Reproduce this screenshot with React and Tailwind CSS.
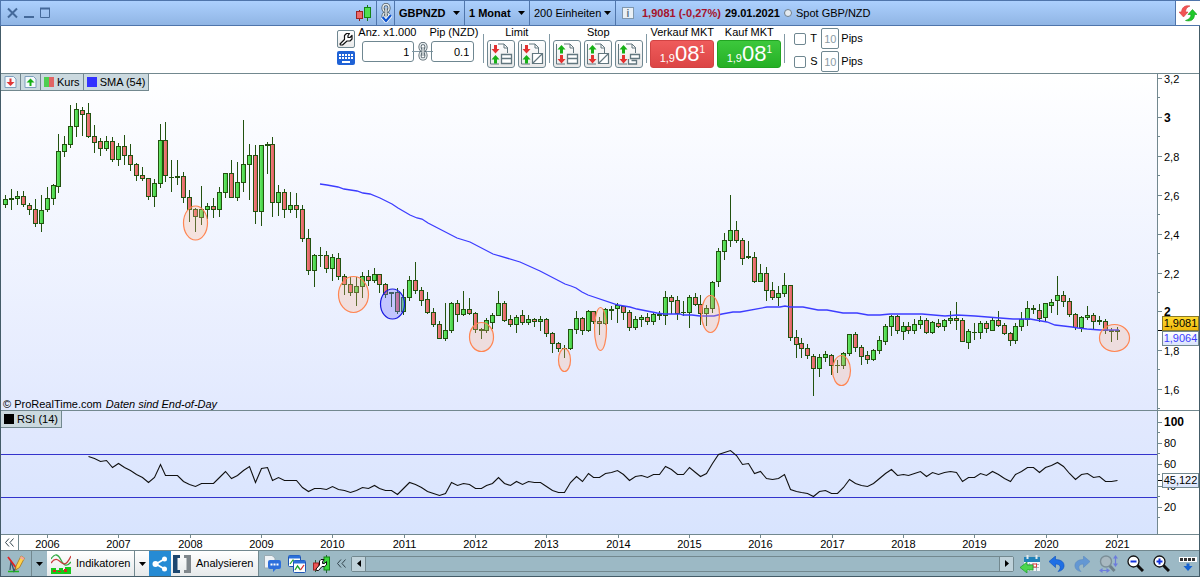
import clsx from 'clsx'

// [high, body top, body bottom, low, direction] per month, g = up, r = down, n = flat
const CANDLES = [
  [195, 199, 205, 208, 'g'], [189, 198, 200, 210, 'n'], [191, 196, 199, 205, 'g'], [191, 196, 205, 207, 'r'],
  [203, 205, 210, 215, 'r'], [199, 209, 224, 227, 'r'], [195, 210, 224, 232, 'g'], [187, 198, 210, 212, 'g'],
  [184, 185, 199, 205, 'g'], [134, 151, 187, 193, 'g'], [136, 144, 152, 157, 'g'], [105, 126, 145, 148, 'g'],
  [103, 109, 127, 137, 'g'], [107, 110, 115, 136, 'r'], [103, 113, 137, 138, 'r'], [125, 136, 143, 153, 'r'],
  [138, 141, 149, 156, 'r'], [136, 141, 149, 151, 'g'], [137, 141, 160, 162, 'r'], [143, 146, 160, 166, 'g'],
  [135, 146, 156, 165, 'r'], [144, 155, 165, 171, 'r'], [163, 164, 176, 181, 'r'], [167, 175, 179, 181, 'r'],
  [178, 178, 197, 200, 'r'], [179, 183, 197, 207, 'g'], [124, 140, 184, 188, 'g'], [122, 140, 176, 182, 'r'],
  [160, 177, 178, 192, 'n'], [160, 176, 178, 185, 'n'], [172, 176, 198, 203, 'r'], [190, 197, 210, 222, 'r'],
  [208, 209, 217, 232, 'r'], [186, 209, 218, 225, 'g'], [203, 206, 210, 219, 'g'], [198, 206, 210, 218, 'r'],
  [187, 192, 210, 217, 'g'], [173, 173, 193, 198, 'g'], [160, 173, 198, 198, 'r'], [162, 182, 198, 201, 'g'],
  [120, 164, 183, 192, 'g'], [144, 155, 165, 200, 'g'], [145, 155, 212, 224, 'r'], [145, 145, 212, 226, 'g'],
  [142, 144, 146, 174, 'n'], [137, 144, 203, 217, 'r'], [185, 192, 203, 216, 'g'], [189, 192, 210, 218, 'r'],
  [192, 205, 210, 213, 'g'], [193, 205, 210, 218, 'r'], [205, 209, 239, 242, 'r'], [229, 238, 271, 275, 'r'],
  [254, 255, 271, 287, 'g'], [247, 255, 256, 267, 'n'], [251, 255, 269, 273, 'r'], [254, 257, 269, 281, 'g'],
  [253, 258, 277, 280, 'r'], [274, 276, 285, 295, 'r'], [277, 284, 293, 296, 'r'], [277, 286, 293, 306, 'g'],
  [272, 276, 287, 298, 'g'], [270, 276, 281, 286, 'r'], [268, 274, 281, 283, 'g'], [274, 274, 285, 293, 'r'],
  [283, 284, 295, 298, 'r'], [292, 292, 294, 307, 'n'], [288, 292, 312, 314, 'r'], [289, 297, 312, 315, 'g'],
  [276, 280, 298, 301, 'g'], [262, 280, 291, 294, 'r'], [287, 290, 301, 306, 'r'], [292, 299, 313, 314, 'r'],
  [308, 312, 325, 327, 'r'], [321, 324, 339, 339, 'r'], [303, 330, 339, 341, 'g'], [302, 303, 331, 333, 'g'],
  [300, 303, 315, 322, 'r'], [291, 309, 315, 316, 'g'], [298, 309, 314, 315, 'r'], [312, 313, 330, 333, 'r'],
  [328, 329, 331, 339, 'n'], [318, 320, 331, 333, 'g'], [313, 315, 323, 329, 'g'], [291, 303, 316, 316, 'g'],
  [301, 303, 321, 322, 'r'], [315, 319, 325, 327, 'r'], [315, 317, 325, 333, 'g'], [310, 315, 323, 325, 'r'],
  [315, 319, 323, 325, 'g'], [318, 319, 322, 327, 'r'], [316, 319, 322, 331, 'g'], [318, 319, 334, 337, 'r'],
  [332, 333, 344, 353, 'r'], [342, 343, 349, 352, 'r'], [345, 348, 349, 358, 'n'], [329, 329, 349, 350, 'g'],
  [311, 318, 330, 334, 'g'], [317, 318, 331, 335, 'r'], [310, 311, 331, 332, 'g'], [311, 311, 322, 324, 'r'],
  [317, 321, 324, 335, 'r'], [308, 309, 324, 325, 'g'], [306, 309, 311, 320, 'n'], [303, 305, 309, 323, 'g'],
  [306, 306, 313, 320, 'r'], [310, 312, 328, 331, 'r'], [316, 319, 328, 330, 'g'], [315, 317, 320, 327, 'g'],
  [313, 317, 322, 325, 'r'], [312, 314, 322, 325, 'g'], [311, 314, 316, 320, 'n'], [291, 297, 316, 325, 'g'],
  [295, 297, 302, 314, 'r'], [296, 300, 314, 320, 'r'], [301, 312, 313, 316, 'n'], [295, 297, 313, 328, 'g'],
  [293, 297, 305, 306, 'r'], [295, 304, 314, 325, 'r'], [305, 308, 314, 326, 'g'], [281, 282, 309, 313, 'g'],
  [248, 251, 282, 287, 'g'], [233, 240, 252, 260, 'g'], [195, 230, 241, 247, 'g'], [221, 230, 241, 243, 'r'],
  [238, 240, 259, 265, 'r'], [241, 256, 258, 259, 'n'], [252, 257, 282, 283, 'r'], [264, 273, 282, 282, 'g'],
  [267, 273, 291, 301, 'r'], [282, 290, 298, 300, 'r'], [286, 293, 298, 306, 'g'], [273, 285, 294, 297, 'g'],
  [285, 285, 338, 341, 'r'], [330, 337, 345, 358, 'r'], [338, 343, 349, 358, 'r'], [344, 348, 356, 359, 'r'],
  [354, 356, 369, 396, 'r'], [354, 357, 369, 377, 'g'], [351, 354, 358, 362, 'g'], [354, 355, 366, 375, 'r'],
  [360, 365, 366, 373, 'n'], [352, 353, 366, 369, 'g'], [334, 334, 354, 356, 'g'], [332, 334, 348, 352, 'r'],
  [345, 347, 357, 365, 'r'], [351, 355, 360, 364, 'r'], [349, 350, 360, 361, 'g'], [336, 340, 351, 354, 'g'],
  [324, 326, 342, 345, 'g'], [315, 316, 327, 336, 'g'], [315, 316, 331, 334, 'r'], [322, 326, 332, 340, 'g'],
  [322, 326, 331, 334, 'r'], [319, 324, 331, 334, 'g'], [316, 320, 325, 329, 'g'], [318, 320, 333, 334, 'r'],
  [321, 322, 333, 334, 'g'], [319, 323, 327, 328, 'r'], [319, 320, 327, 331, 'g'], [311, 318, 321, 324, 'g'],
  [302, 318, 321, 330, 'r'], [318, 320, 342, 342, 'r'], [329, 331, 343, 349, 'g'], [323, 332, 333, 340, 'n'],
  [321, 323, 333, 339, 'g'], [321, 323, 329, 333, 'r'], [318, 320, 331, 331, 'g'], [311, 320, 326, 327, 'r'],
  [323, 325, 334, 335, 'r'], [332, 333, 341, 346, 'r'], [323, 326, 341, 344, 'g'], [312, 319, 327, 331, 'g'],
  [301, 308, 320, 326, 'g'], [305, 308, 310, 314, 'n'], [304, 310, 319, 322, 'r'], [303, 303, 318, 322, 'g'],
  [299, 302, 306, 313, 'g'], [276, 295, 301, 315, 'g'], [291, 295, 302, 307, 'r'], [298, 301, 315, 317, 'r'],
  [313, 314, 328, 330, 'r'], [316, 317, 328, 332, 'g'], [306, 315, 318, 320, 'g'], [313, 315, 322, 330, 'r'],
  [316, 320, 322, 325, 'n'], [319, 321, 331, 334, 'r'], [328, 330, 332, 342, 'n'], [327, 330, 332, 340, 'n'],
]

const SMA =
  '319,184 326,185 337,187 343,189 356,191 362,193 369,194 379,198 391,204 397,208 409,215 416,218 421,219 427,223 456,238 469,242 492,254 519,262 539,271 564,284 570,286 575,288 581,292 587,295 617,305 629,307 636,309 656,313 663,314 679,314 682,315 691,315 699,316 713,316 721,314 732,312 739,312 766,307 779,307 784,306 789,307 802,307 817,310 826,310 842,313 856,313 867,315 879,315 889,314 921,314 944,316 956,315 974,316 999,318 1012,319 1029,319 1046,322 1054,325 1071,327 1077,328 1086,329 1099,330 1118,330'

const RSI_START = 14
const RSI = [
  456, 458, 461, 460, 467, 463, 467, 470, 474, 477, 482, 477, 464, 475, 475, 475, 481, 484, 486, 483, 483, 483, 477,
  471, 478, 475, 470, 466, 482, 468, 467, 480, 477, 480, 480, 480, 487, 491, 488, 488, 489, 486, 489, 490, 492, 490,
  487, 488, 485, 488, 490, 490, 494, 488, 482, 484, 487, 491, 493, 495, 493, 482, 485, 483, 484, 488, 488, 485, 483,
  477, 483, 485, 481, 484, 481, 482, 482, 486, 490, 492, 492, 482, 476, 481, 473, 477, 477, 473, 472, 470, 474, 480,
  476, 475, 477, 474, 474, 466, 469, 474, 474, 467, 472, 476, 473, 463, 454, 452, 450, 455, 464, 463, 473, 471, 478,
  479, 478, 474, 489, 491, 492, 493, 496, 491, 490, 493, 493, 487, 479, 483, 485, 486, 483, 478, 473, 469, 475, 474,
  475, 473, 471, 476, 472, 474, 472, 471, 472, 481, 477, 477, 473, 475, 471, 474, 478, 481, 474, 471, 467, 467, 472,
  467, 465, 462, 466, 473, 479, 474, 473, 477, 476, 481, 481, 480,
]

const MARKS = [
  [194.5, 223, 12, 17], [352.5, 294.5, 15, 18], [391.5, 304, 12, 15, 'blue'], [480.5, 337, 12, 14.5],
  [563.5, 360, 6, 11.5], [599.5, 329, 6, 21.5], [709.5, 314, 9, 18.5], [840.5, 370.5, 9, 15], [1113.5, 338, 15, 13.5],
]

const PLOT_WIDTH = 1156
const YEARS = Array.from({ length: 16 }, (_, i) => 2006 + i)
const PRICE_TICKS = ['3,2', '3', '2,8', '2,6', '2,4', '2,2', '2', '1,8', '1,6']
const BODY_FILL = { g: 'url(#up)', r: 'url(#down)', n: '#22520f' }

const candleX = (i) => Math.floor(4.5 + i * 5.944)

/* ---------- icons ---------- */

function Caret() {
  return (
    <svg width="7" height="4" viewBox="0 0 7 4" aria-hidden="true">
      <path d="M0 0h7L3.5 4z" fill="#000" />
    </svg>
  )
}

function CollapseIcon() {
  return (
    <svg width="9" height="9" viewBox="0 0 9 9" fill="none" stroke="#33444d" aria-hidden="true">
      <path d="M4 .5l-3.500 4 3.500 4M8.500 .5L5 4.500l3.500 4" />
    </svg>
  )
}

function CandlesIcon() {
  return (
    <svg width="16" height="16" viewBox="0 0 16 16" aria-hidden="true">
      <path d="M3.500 5v11" stroke="#8c1d1d" />
      <rect x=".5" y="6.500" width="6" height="7" fill="#ee6a6a" stroke="#9c2323" />
      <path d="M11.500 0v16" stroke="#137a13" />
      <rect x="8.500" y="2.500" width="6" height="10" fill="#4fdf4f" stroke="#158415" />
    </svg>
  )
}

function ChainIcon({ check }) {
  return (
    <svg width="12" height="20" viewBox="0 0 12 20" fill="none" aria-hidden="true">
      <rect x="3" y="1.500" width="6" height="7" rx="3" stroke="#4b5a63" strokeWidth="3" />
      <rect x="3" y="10" width="6" height="7" rx="3" stroke="#4b5a63" strokeWidth="3" />
      <rect x="3" y="1.500" width="6" height="7" rx="3" stroke="#e4eaec" strokeWidth="1.400" />
      <rect x="3" y="10" width="6" height="7" rx="3" stroke="#e4eaec" strokeWidth="1.400" />
      <path d="M6 5v9" stroke="#4b5a63" strokeWidth="3" />
      <path d="M6 5v9" stroke="#f2f5f6" strokeWidth="1.400" />
      {check && (
        <>
          <path d="M2.500 14l3.500 4 5-6" stroke="#fff" strokeWidth="4" />
          <path d="M2.500 14l3.500 4 5-6" stroke="#0d54cf" strokeWidth="2.200" />
        </>
      )}
    </svg>
  )
}

function WrenchIcon() {
  return (
    <svg width="14" height="14" viewBox="0 0 14 14" aria-hidden="true">
      <path
        d="M7.500 1.500h3L9 3.500v2h2l2-2v3.500L11 9H8l-4.500 4H1.500L1 12l4.500-4.500V3.500z"
        fill="#fff"
        stroke="#111"
        strokeWidth="1.200"
        strokeLinejoin="round"
      />
    </svg>
  )
}

function KeyboardIcon() {
  return (
    <svg width="18" height="14" viewBox="0 0 18 14" aria-hidden="true">
      <rect width="18" height="14" rx="2" fill="#1f62d6" />
      <path d="M2 4h14M2 7h14" stroke="#fff" strokeWidth="2" strokeDasharray="2 1" />
      <path d="M5 11h8" stroke="#fff" strokeWidth="2" />
    </svg>
  )
}

function OrderIcon({ up, shape }) {
  const red = <path d="M-1.500 0h3v4h2.500L0 8.500-4 4h2.500z" fill="#e33131" />
  const green = <path d="M-1.500 8.500h3v-4h2.500L0 0-4 4.500h2.500z" fill="#16b016" />
  return (
    <svg width="24" height="22" viewBox="0 0 24 22" fill="none" aria-hidden="true">
      <path d="M9 1h6l3.500 3.500V10M1.500 1v20H10M15 1v4h4" stroke="#62777f" />
      <g transform="translate(6.500 2)">{up ? green : red}</g>
      <g transform="translate(6.500 12)">{up ? red : green}</g>
      {shape === 'bar' && <path d="M12.500 11.500h10v4h-10zM12.500 15.500h10v5h-10z" fill="#fff" stroke="#62777f" strokeWidth="1.300" />}
      {shape === 'slash' && <path d="M12.500 10.500h10v10h-10zM12.500 20.500l10-10" fill="#fff" stroke="#62777f" strokeWidth="1.200" />}
      {shape === 'trail' && <path d="M13.500 11.500h9v4h-9zM11.500 16v5h8v-3.500h-5" fill="#fff" stroke="#62777f" strokeWidth="1.300" />}
    </svg>
  )
}

function SheetIcon({ up }) {
  return (
    <svg width="13" height="12" viewBox="0 0 13 12" aria-hidden="true">
      <path d="M1 .500h8.500L12 3v8.500H1z" fill="#f5f9fd" stroke="#7f9fbd" />
      {up ? (
        <path d="M5.500 10V6.500H2.500L6.500 2.500l4 4h-3V10z" fill="#16b016" />
      ) : (
        <path d="M5.500 2.500V6H2.500l4 4 4-4h-3V2.500z" fill="#e03636" />
      )}
    </svg>
  )
}

function RefreshIcon() {
  return (
    <svg width="18" height="17" viewBox="0 0 18 17" aria-hidden="true">
      <path d="M11 1C5.500 0 3 2.500 2.500 7H0l4.500 5L9 7H6.500c0-3 1.500-5 4.500-6z" fill="#f25555" stroke="#d93c3c" strokeWidth=".6" />
      <path d="M6.500 15.500c5.500 1.500 9-1 9-6H18L13.500 4.500 9 9.500h3c0 3-2 5-5.500 6z" fill="#1fc92a" stroke="#0e9a18" strokeWidth=".6" />
    </svg>
  )
}

function PencilIcon() {
  return (
    <svg width="18" height="18" viewBox="0 0 18 18" fill="none" aria-hidden="true">
      <path d="M1 16.500h11" stroke="#1bb51b" strokeWidth="1.500" />
      <path d="M3 15L4 6l3 10 5-9" stroke="#3d5669" strokeWidth="1.300" />
      <path d="M1 2l9 12" stroke="#e32020" strokeWidth="1.700" />
      <path d="M9 11l5-10 3.500 2-5 9.500L8.500 15z" fill="#ffd24a" stroke="#a8741a" strokeWidth=".8" />
      <path d="M14 1l3.500 2-1 2L13 3z" fill="#f3a5a0" />
    </svg>
  )
}

function IndicatorIcon() {
  return (
    <svg width="20" height="20" viewBox="0 0 20 20" fill="none" aria-hidden="true">
      <path d="M0 5c4-6 7-5 10 1s6 7 10 2" stroke="#35ab45" strokeWidth="1.300" />
      <path d="M0 9c5-7 8-2 11 0s5 1 9-7" stroke="#c63b3b" strokeWidth="1.300" />
      <path d="M0 14h5v2h3v-2h4v2h2v-3h6v7H0z" fill="#16c81a" />
      <path d="M2 18v-2h3v2zM7 18v-1h3v1zM13 18v-3h3v3z" fill="#d22" />
    </svg>
  )
}

function ShareIcon() {
  return (
    <svg width="16" height="16" viewBox="0 0 16 16" aria-hidden="true">
      <path d="M12.500 3L4 8l8.500 5" fill="none" stroke="#fff" strokeWidth="1.800" />
      <circle cx="3.500" cy="8" r="3" fill="#fff" />
      <circle cx="12.500" cy="3" r="2.500" fill="#fff" />
      <circle cx="12.500" cy="13" r="2.500" fill="#fff" />
    </svg>
  )
}

function BracketsIcon() {
  return (
    <svg width="18" height="18" viewBox="0 0 18 18" aria-hidden="true">
      <path d="M0 0h7v3H4.500v12H7v3H0z" fill="#1d4770" />
      <path d="M11 0h7v18h-7v-3h2.500V3H11z" fill="#80878c" />
    </svg>
  )
}

function CommentIcon() {
  return (
    <svg width="17" height="17" viewBox="0 0 17 17" aria-hidden="true">
      <path d="M.500.500H8L11 3v10H.500z" fill="#eef3f6" stroke="#9aabb3" />
      <path d="M6 5h9q2 0 2 2v5q0 2-2 2h-3l-3 3v-3H6q-2 0-2-2V7q0-2 2-2z" fill="#2e6fdc" />
      <path d="M6.500 9.500h8" stroke="#fff" strokeWidth="1.800" strokeDasharray="2 1" />
    </svg>
  )
}

function WindowsIcon() {
  return (
    <svg width="18" height="18" viewBox="0 0 18 18" fill="none" aria-hidden="true">
      <rect x=".500" y=".500" width="12" height="11" rx="1" fill="#fff" stroke="#1e56b4" />
      <path d="M1 2h11" stroke="#2b70da" strokeWidth="3" />
      <path d="M2 9l3-4 2 3" stroke="#1ba52a" strokeWidth="1.200" />
      <rect x="5.500" y="5.500" width="12" height="12" rx="1" fill="#fff" stroke="#1e56b4" />
      <path d="M6 7h11" stroke="#2b70da" strokeWidth="3" />
      <path d="M7 15l2.500-4 3 4" stroke="#1ba52a" strokeWidth="1.300" />
      <path d="M12.500 15l3.500-5" stroke="#d92f2f" strokeWidth="1.300" />
    </svg>
  )
}

function TradeToolIcon() {
  return (
    <svg width="17" height="18" viewBox="0 0 17 18" aria-hidden="true">
      <path d="M2.500 5v12M13.500 0v18" stroke="#23643a" />
      <rect x=".500" y="8" width="5" height="7" fill="#e55" stroke="#9c2323" />
      <rect x="11" y="2" width="5.500" height="13" fill="#3bd63b" stroke="#158415" />
      <path d="M8 4.500h3L9.500 6.500v2h2l2-2V10l-2 1.500H9L5.500 15.500h-2l-.500-1.500L6.500 10V6z" fill="#fff" stroke="#111" />
    </svg>
  )
}

function CalendarIcon() {
  return (
    <svg width="20" height="18" viewBox="0 0 20 18" aria-hidden="true">
      <rect x="4" y="2" width="16" height="14" fill="#f2f5f7" />
      <path d="M4 2h16v5H4z" fill="#2182b8" />
      <path d="M7.500 0v4M16.500 0v4" stroke="#dfe9ee" strokeWidth="2" />
      <path d="M6 9.500h13M6 12.500h13M9.500 8v8M13 8v8M16.500 8v8" stroke="#8fa4ae" strokeWidth=".8" />
      <rect x="13" y="9" width="3.500" height="3" fill="#fff" stroke="#e03a3a" />
      <path d="M0 12.500L7 7v3h6v5H7v3z" fill="#4cd64c" stroke="#1b9b2b" strokeWidth=".7" />
    </svg>
  )
}

function UndoIcon({ redo }) {
  return (
    <svg width="16" height="16" viewBox="0 0 16 16" className={clsx(redo && '-scale-x-100 opacity-45')} aria-hidden="true">
      <path d="M0 5.500L6.500 0v3.500c6 0 9 3 8.500 7-.300 2.500-2.500 4.500-6 5 3.500-3 3-7.500-2.500-7.500v3.500z" fill="#1f6fe5" stroke="#0f50b8" strokeWidth=".6" />
    </svg>
  )
}

function ZoomIcon({ sign }) {
  return (
    <svg width="17" height="17" viewBox="0 0 17 17" aria-hidden="true">
      <path d="M10 10l6 6" stroke="#111" strokeWidth="3" />
      <circle cx="6.500" cy="6.500" r="5.500" fill="#fff" stroke="#111" strokeWidth="1.300" />
      <path d={sign === '+' ? 'M3.500 6.500h6M6.500 3.500v6' : 'M3.500 6.500h6'} stroke="#1432dc" strokeWidth="2" />
    </svg>
  )
}

function ZoomFitIcon() {
  return (
    <svg width="19" height="18" viewBox="0 0 19 18" fill="none" aria-hidden="true">
      <path d="M10 10l5.500 6" stroke="#6f818a" strokeWidth="3" />
      <circle cx="7" cy="6.500" r="5.500" fill="#a9b9c1" stroke="#7b8e97" strokeWidth="1.400" />
      <path d="M16.500 2v8M2 15.500h7" stroke="#6c7cdc" strokeWidth="1.200" />
      <path d="M14 3.500L16.500 0 19 3.500zM14 8.500l2.500 3.500L19 8.500zM3.500 13L0 15.500 3.500 18zM7.500 13l3.500 2.500L7.500 18z" fill="#6c7cdc" />
    </svg>
  )
}

function ExpandIcon() {
  return (
    <svg width="18" height="14" viewBox="0 0 18 14" aria-hidden="true">
      <rect width="18" height="5" fill="#fff" />
      <path d="M1 2.500h16" stroke="#333" strokeWidth="3" strokeDasharray="3 1" />
      <path d="M7.500 6.500h3V9h3L9 14 4.500 9h3z" fill="#1663d0" />
    </svg>
  )
}

/* ---------- header ---------- */

function HeaderSelect({ label, value, className }) {
  return (
    <div className="relative flex h-full items-center border-r border-[#4f75ab]">
      <select aria-label={label} className={clsx('h-full appearance-none bg-transparent pl-1 outline-none', className)}>
        <option>{value}</option>
      </select>
      <span className="pointer-events-none absolute right-1">
        <Caret />
      </span>
    </div>
  )
}

function TitleBar() {
  return (
    <header className="flex h-[26px] border-y border-l border-[#4f75ab] bg-white">
      <div className="flex min-w-0 flex-1 items-center border-r border-[#4f75ab] bg-linear-to-b from-[#acd0fe] to-[#90b5e4]">
        <div className="flex w-[355px] shrink-0 items-center gap-1.5 pl-1.5 text-[#44699a]">
          <button aria-label="Schließen">
            <svg width="11" height="12" viewBox="0 0 11 12"><path d="M1 1.500l9 9M10 1.500l-9 9" stroke="currentColor" strokeWidth="2" /></svg>
          </button>
          <button aria-label="Minimieren">
            <svg width="10" height="12" viewBox="0 0 10 12"><path d="M0 10h10" stroke="currentColor" strokeWidth="2" /></svg>
          </button>
          <button aria-label="Maximieren">
            <svg width="11" height="12" viewBox="0 0 11 12"><path d="M.500 1.500h9v9h-9z" fill="none" stroke="currentColor" /><path d="M0 1.500h10" stroke="currentColor" strokeWidth="2" /></svg>
          </button>
        </div>
        <button aria-label="Charttyp" className="flex h-full w-[21px] shrink-0 items-center border-r border-[#4f75ab]">
          <CandlesIcon />
        </button>
        <button aria-label="Verknüpfung" className="flex h-full w-[18px] shrink-0 items-center justify-center border-r border-[#4f75ab]">
          <ChainIcon check />
        </button>
        <HeaderSelect label="Wertpapier" value="GBPNZD" className="w-[69px] font-bold" />
        <HeaderSelect label="Zeiteinheit" value="1 Monat" className="w-[64px] font-bold" />
        <HeaderSelect label="Anzahl Einheiten" value="200 Einheiten" className="w-[85px]" />
        <div className="flex items-center gap-1 pl-1.5 whitespace-nowrap">
          <button aria-label="Info" className="mr-1 flex size-3 items-center justify-center border border-[#7f97ad] bg-[#e9f0f6] text-[10px] font-bold text-[#5f7486]">
            i
          </button>
          <span className="font-bold text-[#a5122a]">1,9081 (-0,27%)</span>
          <span className="font-bold">29.01.2021</span>
          <span className="size-2 rounded-full border border-[#6e7f8d] bg-[#e4eaf0]" />
          <span>Spot GBP/NZD</span>
        </div>
      </div>
      <button aria-label="Aktualisieren" className="flex w-6 items-center justify-center">
        <RefreshIcon />
      </button>
    </header>
  )
}

function Divider() {
  return <div className="mt-2 h-[29px] w-px bg-[#8299a4]" />
}

function OrderGroup({ title, up, shapes }) {
  return (
    <div className="flex flex-col items-center">
      <span className="h-3.5 leading-3">{title}</span>
      <div className="flex gap-[3px]">
        {shapes.map((shape) => (
          <button
            key={shape}
            aria-label={`${title} ${shape}`}
            className="flex h-7 w-7 items-center justify-center rounded-[3px] border border-[#6f8791] bg-linear-to-b from-white to-[#e9e9e9]"
          >
            <OrderIcon up={up} shape={shape} />
          </button>
        ))}
      </div>
    </div>
  )
}

function DealButton({ title, className }) {
  return (
    <div className="flex w-16 flex-col items-center whitespace-nowrap">
      <span className="h-3.5 leading-3">{title}</span>
      <button aria-label={title} className={clsx('flex h-7 w-16 items-end justify-center rounded-[3px] border pb-[3px] leading-none text-white', className)}>
        <span>1,9</span>
        <span className="text-[22px] leading-[20px]">08</span>
        <span className="self-start pt-1 text-[10px] leading-[10px]">1</span>
      </button>
    </div>
  )
}

function PipRow({ id, label }) {
  return (
    <div className="flex items-center">
      <input id={id} type="checkbox" className="size-3 appearance-none rounded-[2px] border border-[#6f8791] bg-white" />
      <label htmlFor={id} className="ml-1 w-[11px]">{label}</label>
      <input
        aria-label={`${label} Pips`}
        defaultValue="10"
        className="h-[21px] w-[18px] rounded-[2px] border border-[#6f8791] text-center text-[#8a9ba5] outline-none"
      />
      <span className="ml-0.5">Pips</span>
    </div>
  )
}

function OrderBar() {
  return (
    <section className="flex h-[47px] justify-center gap-[3px] bg-white">
      <div className="flex flex-col gap-[3px] pt-1">
        <button aria-label="Einstellungen" className="flex size-[18px] items-center justify-center rounded-[2px] border border-[#6f8791] bg-linear-to-b from-white to-[#e9e9e9]">
          <WrenchIcon />
        </button>
        <button aria-label="Tastatur">
          <KeyboardIcon />
        </button>
      </div>
      <div className="flex w-[122px] flex-col">
        <div className="flex h-3.5 justify-between leading-3 whitespace-nowrap">
          <label htmlFor="amount">Anz. x1.000</label>
          <label htmlFor="pip" className="pr-0.5">Pip (NZD)</label>
        </div>
        <div className="flex items-center pt-px pl-1">
          <input id="amount" defaultValue="1" className="h-[21px] w-[52px] rounded-[3px] border border-[#6f8791] pr-1 text-right outline-none" />
          <span className="-mx-0.5 flex w-[21px] justify-center bg-[linear-gradient(#8299a4,#8299a4)] bg-[length:100%_1px] bg-center bg-no-repeat">
            <ChainIcon />
          </span>
          <input id="pip" defaultValue="0.1" className="h-[21px] w-[43px] rounded-[3px] border border-[#6f8791] pr-1 text-right outline-none" />
        </div>
      </div>
      <Divider />
      <OrderGroup title="Limit" shapes={['bar', 'slash']} />
      <Divider />
      <OrderGroup title="Stop" up shapes={['bar', 'slash', 'trail']} />
      <Divider />
      <DealButton title="Verkauf MKT" className="border-[#d24343] bg-linear-to-b from-[#ef5b5b] to-[#dc4545]" />
      <DealButton title="Kauf MKT" className="border-[#22a422] bg-linear-to-b from-[#3cc83c] to-[#25b025]" />
      <Divider />
      <div className="flex flex-col gap-0.5 pt-0.5 pl-1.5">
        <PipRow id="target" label="T" />
        <PipRow id="stop" label="S" />
      </div>
    </section>
  )
}

/* ---------- charts ---------- */

function LegendChip({ label, children, ...props }) {
  return (
    <button className="flex h-[17px] items-center gap-[3px] border-r border-b border-[#72888f] bg-[#cbd9df] px-[3px] whitespace-nowrap" {...props}>
      {children}
      {label}
    </button>
  )
}

function PriceChart() {
  return (
    <div className="relative min-w-0 flex-1 bg-linear-to-b from-white to-[#e2e9fe]">
      <svg viewBox={`0 74 ${PLOT_WIDTH} 336`} preserveAspectRatio="none" className="block h-[336px] w-full">
        <defs>
          <linearGradient id="up">
            <stop offset="0" stopColor="#6bea6b" />
            <stop offset="1" stopColor="#3fcb3f" />
          </linearGradient>
          <linearGradient id="down">
            <stop offset="0" stopColor="#f28080" />
            <stop offset="1" stopColor="#dc5f5f" />
          </linearGradient>
        </defs>
        <g shapeRendering="crispEdges">
          {CANDLES.map(([high, top, bottom, low, dir], i) => {
            const x = candleX(i)
            return (
              <g key={i}>
                <rect x={x} y={high} width="1" height={low - high} fill="#22520f" />
                <rect x={x - 2} y={top} width="5" height={bottom - top} fill="#22520f" />
                {dir !== 'n' && <rect x={x - 1} y={top + 1} width="3" height={bottom - top - 2} fill={BODY_FILL[dir]} />}
              </g>
            )
          })}
        </g>
        <polyline points={SMA} fill="none" stroke="#3c3cff" strokeWidth="1.300" />
        {MARKS.map(([cx, cy, rx, ry, tone]) => (
          <ellipse
            key={cx}
            cx={cx}
            cy={cy}
            rx={rx}
            ry={ry}
            fill={tone ? '#7878ff' : '#ffb48c'}
            fillOpacity={tone ? 0.35 : 0.28}
            stroke={tone ? '#1818e0' : '#ff8552'}
            strokeWidth="1.200"
          />
        ))}
      </svg>
      <div className="absolute top-0 left-0 flex">
        <LegendChip aria-label="Verkaufen"><SheetIcon /></LegendChip>
        <LegendChip aria-label="Kaufen"><SheetIcon up /></LegendChip>
        <LegendChip label="Kurs">
          <span className="flex"><i className="h-2.5 w-[5px] bg-[#4fce4f]" /><i className="h-2.5 w-[5px] bg-[#e16464]" /></span>
        </LegendChip>
        <LegendChip label="SMA (54)"><i className="size-2.5 bg-[#3232ff]" /></LegendChip>
      </div>
      <p className="absolute bottom-0 left-0.5 leading-3 whitespace-nowrap">
        © ProRealTime.com <em className="ml-px">Daten sind End-of-Day</em>
      </p>
    </div>
  )
}

function RsiChart() {
  const points = RSI.map((y, i) => `${candleX(i + RSI_START) + 0.5},${y + 0.5}`).join(' ')
  return (
    <div className="relative min-w-0 flex-1 bg-linear-to-b from-[#e2e9fe] to-[#d8e4fe]">
      <svg viewBox={`0 411 ${PLOT_WIDTH} 123`} preserveAspectRatio="none" className="block h-[123px] w-full">
        <path d="M0 454.500h1156M0 497.500h1156" stroke="#3333cc" />
        <polyline points={points} fill="none" stroke="#111" strokeWidth="1.100" />
      </svg>
      <div className="absolute top-0 left-0">
        <LegendChip label="RSI (14)"><i className="size-2.5 bg-black" /></LegendChip>
      </div>
    </div>
  )
}

function PriceAxis() {
  return (
    <div className="relative w-[42px] shrink-0 border-l border-[#72888f] bg-white">
      <svg width="41" height="336" className="block">
        {PRICE_TICKS.map((label, i) => {
          const y = Math.round(4 + i * 38.9)
          const whole = !label.includes(',')
          return (
            <g key={label}>
              <path d={`M0 ${y + 0.5}h4M0 ${y + 19.5}h2`} stroke="#72888f" />
              <text x="6" y={y + 5} className={clsx(whole && 'text-xs font-bold')}>{label}</text>
            </g>
          )
        })}
        <path d="M0 256.500h4" stroke="#000" />
      </svg>
      <div className="absolute top-[242px] right-0 left-1 text-center">
        <div className="h-[15px] border border-[#8a7a28] bg-linear-to-b from-[#ffd92e] to-[#efb90c] leading-[13px]">1,9081</div>
        <div className="h-[15px] border border-[#72888f] bg-linear-to-b from-white to-[#d9e3fb] leading-[13px] text-[#3c3cff]">1,9064</div>
      </div>
    </div>
  )
}

function RsiAxis() {
  return (
    <div className="relative w-[42px] shrink-0 border-l border-[#72888f] bg-white">
      <svg width="41" height="123" className="block">
        {[100, 80, 60, 40, 20].map((value, i) => {
          const y = Math.round(11 + i * 21.2)
          return (
            <g key={value}>
              <path d={`M0 ${y + 0.5}h4M0 ${y + 10.5}h2`} stroke="#72888f" />
              <text x="6" y={y + 4} className={clsx(value === 100 && 'text-xs font-bold')}>{value}</text>
            </g>
          )
        })}
        <path d="M0 69.500h4" stroke="#000" />
      </svg>
      <div className="absolute top-[62px] right-0 left-1 h-[15px] border border-[#72888f] bg-linear-to-b from-white to-[#d9e3fb] text-center leading-[13px]">
        45,122
      </div>
    </div>
  )
}

function TimeAxis() {
  return (
    <div className="flex h-[15px] bg-white">
      <div className="relative min-w-0 flex-1">
        <svg className="block h-[15px] w-full">
          {YEARS.map((year, i) => {
            const x = `${((46.5 + Math.round(i * 71.33)) / PLOT_WIDTH) * 100}%`
            return (
              <g key={year}>
                <line x1={x} x2={x} y1="0" y2="3" stroke="#72888f" />
                <text x={x} y="13" textAnchor="middle">{year}</text>
              </g>
            )
          })}
        </svg>
        <button aria-label="Zurück" className="absolute inset-y-0 left-0 flex w-[18px] items-center justify-center border-r border-[#72888f]">
          <CollapseIcon />
        </button>
      </div>
      <div className="w-[42px] shrink-0" />
    </div>
  )
}

/* ---------- footer ---------- */

const LIGHT = 'bg-linear-to-b from-white to-[#e6e9ea]'

function BottomBar() {
  return (
    <footer className="flex h-[26px] items-center border-t border-[#72888f] bg-[#9cb9c5]">
      <div className="flex h-full shrink-0 items-center">
        <button aria-label="Zeichnen" className="flex h-full w-[31px] items-center justify-center border-r border-[#72888f]"><PencilIcon /></button>
        <button aria-label="Zeichenwerkzeuge" className="flex h-full w-[15px] items-center justify-center"><Caret /></button>
        <button className={clsx('flex h-full w-[88px] items-center gap-[5px] border-r border-[#72888f] pl-1', LIGHT)}>
          <IndicatorIcon />
          Indikatoren
        </button>
        <button aria-label="Indikatorliste" className={clsx('flex h-full w-[14px] items-center justify-center', LIGHT)}><Caret /></button>
        <button aria-label="Teilen" className="flex h-full w-[22px] items-center justify-center bg-[#268bd4]"><ShareIcon /></button>
        <button className={clsx('flex h-full w-[88px] items-center gap-[5px] border-r border-[#72888f] pl-0.5', LIGHT)}>
          <BracketsIcon />
          Analysieren
        </button>
      </div>
      <div className="flex shrink-0 items-center gap-[7px] px-[5px]">
        <button aria-label="Notizen"><CommentIcon /></button>
        <button aria-label="Fenster"><WindowsIcon /></button>
        <button aria-label="Handel"><TradeToolIcon /></button>
        <button aria-label="Einklappen"><CollapseIcon /></button>
      </div>
      <div className="flex h-4 min-w-0 flex-1 items-stretch rounded-[2px] border border-[#72888f]">
        <button aria-label="Nach links" className="flex w-[14px] items-center justify-center border-r border-[#72888f] bg-[#bfd2da]">
          <svg width="4" height="7" viewBox="0 0 4 7"><path d="M4 0v7L0 3.500z" /></svg>
        </button>
        <div className="flex-1" />
        <button aria-label="Nach rechts" className="flex w-[14px] items-center justify-center border-l border-[#72888f] bg-[#bfd2da]">
          <svg width="4" height="7" viewBox="0 0 4 7"><path d="M0 0v7l4-3.500z" /></svg>
        </button>
      </div>
      <div className="flex shrink-0 items-center gap-[9px] pr-0.5 pl-1.5">
        <button aria-label="Datum wählen"><CalendarIcon /></button>
        <button aria-label="Rückgängig"><UndoIcon /></button>
        <button aria-label="Wiederholen"><UndoIcon redo /></button>
        <button aria-label="Anpassen"><ZoomFitIcon /></button>
        <button aria-label="Verkleinern"><ZoomIcon sign="-" /></button>
        <button aria-label="Vergrößern"><ZoomIcon sign="+" /></button>
        <button aria-label="Leiste ausblenden"><ExpandIcon /></button>
      </div>
    </footer>
  )
}

export default function App() {
  return (
    <div className="flex min-h-screen flex-col bg-white font-['Liberation_Sans',Arial,sans-serif] text-[11px] text-black">
      <TitleBar />
      <main className="border-x border-b border-[#445c68]">
        <OrderBar />
        <div className="flex border-t border-[#72888f]">
          <PriceChart />
          <PriceAxis />
        </div>
        <div className="flex border-y border-[#72888f]">
          <RsiChart />
          <RsiAxis />
        </div>
        <TimeAxis />
        <BottomBar />
      </main>
    </div>
  )
}
